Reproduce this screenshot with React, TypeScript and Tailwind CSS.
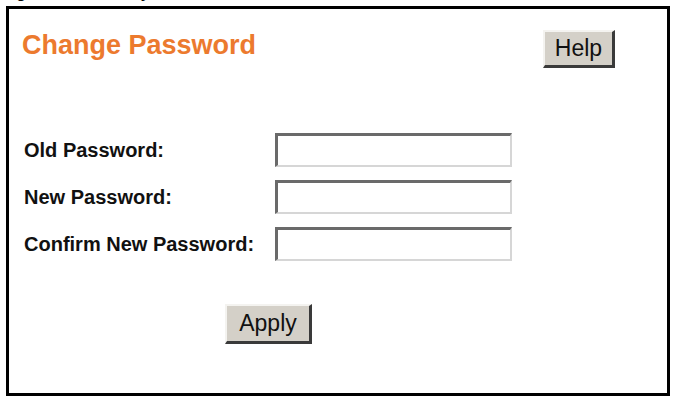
const font = { fontFamily: '"Liberation Sans", Arial, sans-serif' };

function ClassicButton({ label, className }: { label: string; className: string }) {
  return (
    <button
      type="button"
      className={
        "flex items-center justify-center bg-[#d4d0c8] text-[23px] leading-none text-[#111] border-t-2 border-l-2 border-t-[#f4f3f0] border-l-[#f4f3f0] border-r-[3px] border-b-[3px] border-r-[#3a3a3a] border-b-[#3a3a3a] " +
        className
      }
    >
      {label}
    </button>
  );
}

function Field({ label }: { label: string }) {
  return (
    <div className="flex items-center h-[34px]">
      <label className="w-[251px] text-[20px] font-bold text-[#111] leading-none">{label}</label>
      <input
        type="password"
        className="w-[237px] h-[34px] bg-white border-t-[3px] border-l-[3px] border-t-[#6a6a6a] border-l-[#6a6a6a] border-r-2 border-b-2 border-r-[#d6d6d6] border-b-[#d6d6d6] outline-none"
      />
    </div>
  );
}

export default function App() {
  return (
    <div className="w-[673px] h-[401px] bg-white overflow-hidden" style={font}>
      <div className="h-[6px] overflow-hidden">
        <div className="-mt-[17px] pl-[2px] text-[16px] leading-[20px] font-bold text-black whitespace-nowrap">
          Figure 154 Security
        </div>
      </div>
      <div className="ml-[6px] w-[664px] h-[390px] border-[3px] border-black">
        <div className="flex justify-between items-start pt-[21px] pl-[13px] pr-[52px]">
          <h1 className="text-[27px] leading-[30px] font-bold text-[#ec7a2e]">Change Password</h1>
          <ClassicButton label="Help" className="w-[72px] h-[38px]" />
        </div>
        <div className="mt-[65px] pl-[15px] flex flex-col gap-[13px]">
          <Field label="Old Password:" />
          <Field label="New Password:" />
          <Field label="Confirm New Password:" />
        </div>
        <div className="mt-[43px] pl-[216px]">
          <ClassicButton label="Apply" className="w-[87px] h-[40px]" />
        </div>
      </div>
    </div>
  );
}
